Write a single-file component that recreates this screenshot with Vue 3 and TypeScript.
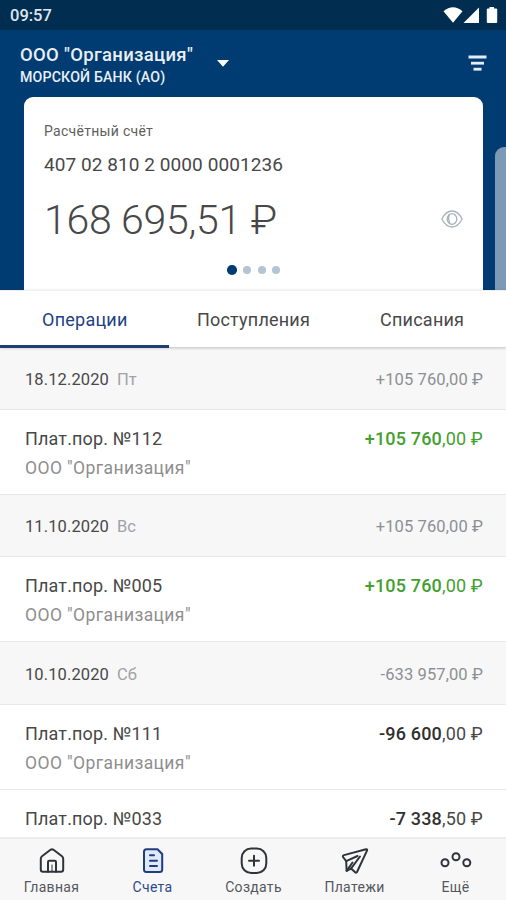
<script setup lang="ts">
interface Operation {
  title: string
  party?: string
  whole: string
  cents: string
  income: boolean
}
interface Day {
  date: string
  weekday: string
  total: string
  operations: Operation[]
}

const tabs: string[] = ['Операции', 'Поступления', 'Списания']
const party = 'ООО "Организация"'
const days: Day[] = [
  {
    date: '18.12.2020',
    weekday: 'Пт',
    total: '+105 760,00 ₽',
    operations: [{ title: 'Плат.пор. №112', party, whole: '+105 760', cents: ',00 ₽', income: true }],
  },
  {
    date: '11.10.2020',
    weekday: 'Вс',
    total: '+105 760,00 ₽',
    operations: [{ title: 'Плат.пор. №005', party, whole: '+105 760', cents: ',00 ₽', income: true }],
  },
  {
    date: '10.10.2020',
    weekday: 'Сб',
    total: '-633 957,00 ₽',
    operations: [
      { title: 'Плат.пор. №111', party, whole: '-96 600', cents: ',00 ₽', income: false },
      { title: 'Плат.пор. №033', whole: '-7 338', cents: ',50 ₽', income: false },
    ],
  },
]
</script>

<template>
  <div class="screen">
    <div class="status">
      <span class="clock">09:57</span>
      <svg class="status-icons" width="56" height="18" viewBox="0 0 56 18" fill="#fff">
        <path d="M0.500 5.200Q10 -2.600 19.500 5.200L10 16.800Z" />
        <path d="M36 1.500V17H20.500Z" />
        <path d="M46.500 1h4.500v1.500h2.200q1 0 1 1V16q0 1-1 1h-8.400q-1 0-1-1V3.500q0-1 1-1h1.700z" />
      </svg>
    </div>

    <header class="header">
      <div class="company">
        <div class="names">
          <div class="org">ООО "Организация"</div>
          <div class="bank">МОРСКОЙ БАНК (АО)</div>
        </div>
        <svg class="caret" width="12" height="7" viewBox="0 0 12 7"><path d="M0 0H12L6 6.800Z" fill="#fff" /></svg>
        <svg class="filter" width="19" height="17" viewBox="0 0 19 17" fill="#e4eefa">
          <rect x="0.500" y="0.500" width="18" height="3" />
          <rect x="3" y="6.800" width="13" height="2.800" />
          <rect x="5.500" y="12.800" width="8" height="2.800" />
        </svg>
      </div>
      <div class="cards">
        <section class="card">
          <div class="kind">Расчётный счёт</div>
          <div class="number">407 02 810 2 0000 0001236</div>
          <div class="balance">
            <span class="amount">168 695,51 ₽</span>
            <svg class="eye" width="22" height="18" viewBox="0 0 22 18" fill="none" stroke="#a9b2b9" stroke-width="1.300">
              <path d="M0.800 9Q5 1 11 1T21.200 9Q17 17 11 17T0.800 9Z" />
              <ellipse cx="11" cy="9" rx="4.800" ry="5.300" />
              <path d="M8.500 4.500Q6.500 9 9 13" />
            </svg>
          </div>
          <div class="dots"><i class="dot on"></i><i class="dot"></i><i class="dot"></i><i class="dot"></i></div>
        </section>
        <section class="card-next"></section>
      </div>
    </header>

    <nav class="tabs">
      <div v-for="(tab, i) in tabs" :key="tab" class="tab" :class="{ active: i === 0 }">{{ tab }}</div>
    </nav>

    <main class="list">
      <template v-for="day in days" :key="day.date">
        <div class="day">
          <span class="date">{{ day.date }}</span>
          <span class="weekday">{{ day.weekday }}</span>
          <span class="total">{{ day.total }}</span>
        </div>
        <div v-for="op in day.operations" :key="op.title" class="op">
          <div class="op-main">
            <span class="title">{{ op.title }}</span>
            <span class="sum" :class="{ income: op.income }"><b>{{ op.whole }}</b>{{ op.cents }}</span>
          </div>
          <div v-if="op.party" class="party">{{ op.party }}</div>
        </div>
      </template>
    </main>

    <footer class="bottom">
      <div class="item">
        <svg width="30" height="30" viewBox="0 0 30 30" class="icon">
          <path d="M3.800 12.800Q3.800 11.200 5 10.300L13.500 3.800Q15 2.800 16.500 3.800L25 10.300Q26.200 11.200 26.200 12.800V23.500Q26.200 25.800 24 25.800H6Q3.800 25.800 3.800 23.500Z" />
          <path d="M11 25.800V16Q11 14.800 12.200 14.800H17.800Q19 14.800 19 16V25.800" />
          <path class="thin" d="M15 19V25" />
        </svg>
        <span class="label">Главная</span>
      </div>
      <div class="item current">
        <svg width="30" height="30" viewBox="0 0 30 30" class="icon">
          <path class="sheet" d="M8.500 3.200H19.500L24.200 8V23.500Q24.200 26 21.700 26H8.500Q6 26 6 23.500V5.700Q6 3.200 8.500 3.200Z" />
          <path d="M12 9.200H16M12 14.800H19M12 20H19" />
        </svg>
        <span class="label">Счета</span>
      </div>
      <div class="item">
        <svg width="30" height="30" viewBox="0 0 30 30" class="icon">
          <rect x="2.700" y="2.500" width="24.600" height="24.600" rx="9.500" />
          <path d="M15 9.800V19.800M10 14.800H20" />
        </svg>
        <span class="label">Создать</span>
      </div>
      <div class="item">
        <svg width="30" height="30" viewBox="0 0 30 30" class="icon">
          <path d="M26 3.200Q27.600 3 27 4.600L17 26Q16.200 27.200 15.200 26.200L11 22.600L6.600 24.800L6.200 15.200L3 11Q2.500 9.500 4 9.100Z" />
          <path d="M6.200 15.200L17.500 10M11 22.600L20 10.500M6.600 24.800L12.500 16.500" />
        </svg>
        <span class="label">Платежи</span>
      </div>
      <div class="item">
        <svg width="34" height="30" viewBox="0 0 34 30" class="icon">
          <circle cx="6" cy="16.800" r="3.500" />
          <circle cx="17" cy="10.800" r="3.500" />
          <circle cx="27.800" cy="16.800" r="3.500" />
        </svg>
        <span class="label">Ещё</span>
      </div>
    </footer>
  </div>
</template>

<style>
body {
  margin: 0;
}
</style>

<style scoped>
.screen {
  width: 506px;
  height: 900px;
  display: flex;
  flex-direction: column;
  overflow: hidden;
  background: #fff;
  font-family: Roboto, "Liberation Sans", sans-serif;
  color: #484848;
  white-space: nowrap;
}
.status {
  flex: none;
  height: 30px;
  box-sizing: border-box;
  padding: 0 7px 0 10px;
  display: flex;
  align-items: center;
  justify-content: space-between;
  background: #002d50;
}
.clock {
  color: #dfe6ed;
  font-size: 16.5px;
  font-weight: 500;
  line-height: 30px;
  padding-top: 1px;
}
.header {
  flex: none;
  height: 260px;
  background: #003c71;
}
.company {
  height: 67px;
  box-sizing: border-box;
  padding: 14px 19px 0 20px;
  display: flex;
  align-items: flex-start;
  color: #e9eff5;
}
.names {
  width: 197px;
}
.org {
  font-size: 18.5px;
  line-height: 22px;
  font-weight: 500;
  letter-spacing: 0.3px;
}
.bank {
  font-size: 14.2px;
  line-height: 20px;
  margin-top: 1px;
  font-weight: 500;
  letter-spacing: 0.15px;
}
.caret {
  margin-top: 16px;
}
.filter {
  margin: 11px 0 0 auto;
}
.cards {
  display: flex;
  padding-left: 24px;
  align-items: flex-end;
  gap: 12px;
  overflow: hidden;
}
.card {
  flex: none;
  width: 459px;
  height: 193px;
  box-sizing: border-box;
  padding: 25px 20px 0;
  background: #fff;
  border-radius: 9px 9px 0 0;
}
.card-next {
  flex: none;
  width: 40px;
  height: 143px;
  background: #7c9ab5;
  border-radius: 9px 0 0 0;
}
.kind {
  font-size: 14px;
  line-height: 18px;
  letter-spacing: 0.3px;
  color: #606060;
}
.number {
  margin-top: 13px;
  font-size: 19px;
  line-height: 24px;
  letter-spacing: 0.07px;
}
.balance {
  display: flex;
  align-items: center;
  justify-content: space-between;
  height: 50px;
  margin-top: 18px;
}
.amount {
  font-size: 41px;
  line-height: 50px;
  font-weight: 300;
  letter-spacing: -0.28px;
}
.eye {
  margin-bottom: 3px;
}
.dots {
  display: flex;
  justify-content: center;
  align-items: center;
  gap: 6.5px;
  height: 10px;
  margin-top: 20px;
}
.dot {
  width: 8px;
  height: 8px;
  border-radius: 50%;
  background: #b3c4d4;
}
.dot.on {
  width: 9.5px;
  height: 9.5px;
  background: #003c71;
}
.tabs {
  position: relative;
  flex: none;
  height: 57px;
  display: flex;
  background: #fff;
  box-shadow: 0 1px 3px rgba(0, 0, 0, 0.24);
}
.tab {
  width: 33.333%;
  box-sizing: border-box;
  padding-left: 1px;
  text-align: center;
  font-size: 18px;
  line-height: 58px;
  letter-spacing: 0.22px;
  border-top: 1px solid #eeeff0;
  height: 58px;
}
.tab.active {
  color: #213f83;
  border-bottom: 3px solid #1e3f73;
}
.list {
  flex: 1;
  min-height: 0;
  overflow: hidden;
}
.day {
  height: 62.8px;
  box-sizing: border-box;
  padding: 3px 23px 0 25px;
  display: flex;
  align-items: center;
  background: #f7f7f8;
  border-bottom: 1px solid #e7e8e9;
  font-size: 16.5px;
  letter-spacing: 0.1px;
}
.weekday {
  margin-left: 8px;
  color: #a0a2a5;
}
.total {
  margin-left: auto;
  color: #8c8f93;
}
.op {
  height: 84.8px;
  box-sizing: border-box;
  padding: 17px 23px 0 25px;
  border-bottom: 1px solid #e7e8e9;
}
.op-main {
  display: flex;
  justify-content: space-between;
  font-size: 18px;
  line-height: 24px;
}
.title {
  letter-spacing: 0.15px;
}
.sum {
  letter-spacing: 0.17px;
}
.sum b {
  font-weight: 500;
  color: #303030;
}
.sum.income,
.sum.income b {
  color: #43a02f;
}
.party {
  margin-top: 6px;
  font-size: 17.5px;
  line-height: 22px;
  letter-spacing: 0.4px;
  color: #8e8e8e;
}
.bottom {
  flex: none;
  height: 63px;
  box-sizing: border-box;
  padding-left: 1px;
  display: flex;
  background: #f7f7f8;
  border-top: 2px solid #ececed;
}
.item {
  flex: 1;
  display: flex;
  flex-direction: column;
  align-items: center;
  padding-top: 7px;
  color: #303438;
}
.item.current {
  color: #1f3c80;
}
.icon {
  height: 30px;
  fill: none;
  stroke: currentColor;
  stroke-width: 2;
  stroke-linejoin: round;
  stroke-linecap: round;
}
.thin {
  stroke-width: 1;
}
.sheet {
  fill: #dfe9fa;
}
.label {
  margin-top: 2px;
  font-size: 14px;
  line-height: 18px;
  letter-spacing: 0.3px;
  color: #55585c;
}
.current .label {
  color: #2c4a8c;
}
</style>
